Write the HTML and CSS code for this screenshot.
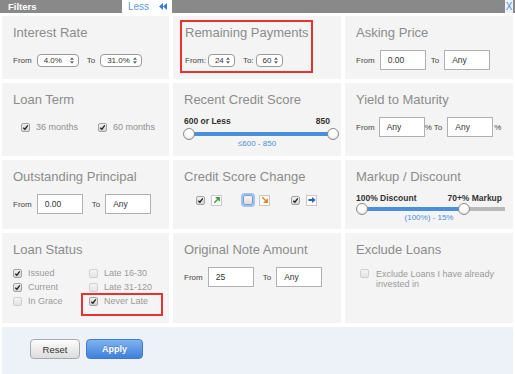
FILE: index.html
```html
<!DOCTYPE html>
<html lang="en">
<head>
  <meta charset="UTF-8">
  <meta name="viewport" content="width=device-width, initial-scale=1.0">
  <title>Filters</title>
  <link rel="stylesheet" href="styles.css">
</head>
<body>
  <div class="topbar">
    <span class="topbar-title">Filters</span>
    <span class="less-tab">Less
      <svg width="8" height="7" viewBox="0 0 8 7"><path d="M0 3.5 L4 0 V7 Z M4 3.5 L8 0 V7 Z" fill="#3a7bd5"/></svg>
    </span>
    <span class="close">X</span>
  </div>

  <div class="filter-grid">
    <!-- Row 1 -->
    <div class="filter-box">
      <h2>Interest Rate</h2>
      <div class="row">
        <span class="lbl">From</span>
        <span class="select w42">4.0% <svg class="updown" viewBox="0 0 5 8"><path d="M2.5 0 L5 3 H0 Z M2.5 8 L5 5 H0 Z" fill="#666"/></svg></span>
        <span class="lbl">To</span>
        <span class="select w42">31.0% <svg class="updown" viewBox="0 0 5 8"><path d="M2.5 0 L5 3 H0 Z M2.5 8 L5 5 H0 Z" fill="#666"/></svg></span>
      </div>
    </div>

    <div class="filter-box">
      <div class="marked-box">
        <h2>Remaining Payments</h2>
        <div class="row">
          <span class="lbl tight">From:</span>
          <span class="select w27">24 <svg class="updown" viewBox="0 0 5 8"><path d="M2.5 0 L5 3 H0 Z M2.5 8 L5 5 H0 Z" fill="#666"/></svg></span>
          <span class="lbl tight">To:</span>
          <span class="select w27">60 <svg class="updown" viewBox="0 0 5 8"><path d="M2.5 0 L5 3 H0 Z M2.5 8 L5 5 H0 Z" fill="#666"/></svg></span>
        </div>
      </div>
    </div>

    <div class="filter-box">
      <h2>Asking Price</h2>
      <div class="row">
        <span class="lbl">From</span>
        <input class="field" type="text" value="0.00">
        <span class="lbl">To</span>
        <input class="field" type="text" value="Any">
      </div>
    </div>

    <!-- Row 2 -->
    <div class="filter-box">
      <h2>Loan Term</h2>
      <div class="row term-row">
        <label class="check"><span class="cb"><svg viewBox="0 0 8 8"><path d="M1.5 4.2 L3.3 6 L6.6 1.6" stroke="#222" stroke-width="1.5" fill="none"/></svg></span>36 months</label>
        <label class="check"><span class="cb"><svg viewBox="0 0 8 8"><path d="M1.5 4.2 L3.3 6 L6.6 1.6" stroke="#222" stroke-width="1.5" fill="none"/></svg></span>60 months</label>
      </div>
    </div>

    <div class="filter-box">
      <h2>Recent Credit Score</h2>
      <div class="slider-labels"><b>600 or Less</b><b>850</b></div>
      <div class="slider credit">
        <div class="track"><div class="fill" style="width: 100%"></div></div>
        <span class="knob" style="left: 2px"></span>
        <span class="knob" style="left: 146px"></span>
      </div>
      <div class="slider-value">&le;600 - 850</div>
    </div>

    <div class="filter-box yield-box">
      <h2>Yield to Maturity</h2>
      <div class="row">
        <span class="lbl">From</span>
        <input class="field" type="text" value="Any">
        <span class="lbl pct">% To</span>
        <input class="field" type="text" value="Any">
        <span class="pct-end">%</span>
      </div>
    </div>

    <!-- Row 3 -->
    <div class="filter-box">
      <h2>Outstanding Principal</h2>
      <div class="row">
        <span class="lbl">From</span>
        <input class="field" type="text" value="0.00">
        <span class="lbl wide">To</span>
        <input class="field" type="text" value="Any">
      </div>
    </div>

    <div class="filter-box">
      <h2>Credit Score Change</h2>
      <div class="row trend-row">
        <span class="trend-group">
          <span class="cb"><svg viewBox="0 0 8 8"><path d="M1.5 4.2 L3.3 6 L6.6 1.6" stroke="#222" stroke-width="1.5" fill="none"/></svg></span>
          <span class="trend"><svg viewBox="0 0 9 9"><path d="M1.5 7.5 L7 2 M3 2 H7 V6" stroke="#3d9b3d" stroke-width="1.6" fill="none"/></svg></span>
        </span>
        <span class="trend-group">
          <span class="cb focus"></span>
          <span class="trend"><svg viewBox="0 0 9 9"><path d="M1.5 1.5 L7 7 M7 3 V7 H3" stroke="#f07a1e" stroke-width="1.6" fill="none"/></svg></span>
        </span>
        <span class="trend-group">
          <span class="cb"><svg viewBox="0 0 8 8"><path d="M1.5 4.2 L3.3 6 L6.6 1.6" stroke="#222" stroke-width="1.5" fill="none"/></svg></span>
          <span class="trend"><svg viewBox="0 0 9 9"><path d="M0.5 3.4 H4.6 V1 L8.6 4.5 L4.6 8 V5.6 H0.5 Z" fill="#2b5fc4"/></svg></span>
        </span>
      </div>
    </div>

    <div class="filter-box">
      <h2>Markup / Discount</h2>
      <div class="slider-labels"><b>100% Discount</b><b>70+% Markup</b></div>
      <div class="slider markup">
        <div class="track"><div class="fill" style="width: 71.6%"></div></div>
        <span class="knob" style="left: 5px"></span>
        <span class="knob" style="left: 107px"></span>
      </div>
      <div class="slider-value">(100%) - 15%</div>
    </div>

    <!-- Row 4 -->
    <div class="filter-box">
      <h2>Loan Status</h2>
      <div class="status-list">
        <label class="check"><span class="cb"><svg viewBox="0 0 8 8"><path d="M1.5 4.2 L3.3 6 L6.6 1.6" stroke="#222" stroke-width="1.5" fill="none"/></svg></span>Issued</label>
        <label class="check"><span class="cb off"></span>Late 16-30</label>
        <label class="check"><span class="cb"><svg viewBox="0 0 8 8"><path d="M1.5 4.2 L3.3 6 L6.6 1.6" stroke="#222" stroke-width="1.5" fill="none"/></svg></span>Current</label>
        <label class="check"><span class="cb off"></span>Late 31-120</label>
        <label class="check"><span class="cb off"></span>In Grace</label>
        <label class="check marked"><span class="cb"><svg viewBox="0 0 8 8"><path d="M1.5 4.2 L3.3 6 L6.6 1.6" stroke="#222" stroke-width="1.5" fill="none"/></svg></span>Never Late</label>
      </div>
    </div>

    <div class="filter-box">
      <h2>Original Note Amount</h2>
      <div class="row">
        <span class="lbl">From</span>
        <input class="field" type="text" value="25">
        <span class="lbl wide">To</span>
        <input class="field" type="text" value="Any">
      </div>
    </div>

    <div class="filter-box">
      <h2>Exclude Loans</h2>
      <label class="exclude"><span class="cb off"></span><span>Exclude Loans I have already invested in</span></label>
    </div>
  </div>

  <div class="footer">
    <button class="btn btn-reset">Reset</button>
    <button class="btn btn-apply">Apply</button>
  </div>
</body>
</html>
```

FILE: styles.css
```css
* {
  box-sizing: border-box;
}

body {
  margin: 0;
  font-family: "Liberation Sans", Arial, sans-serif;
  color: #333;
  background: #fff;
}

/* top bar */
.topbar {
  display: flex;
  align-items: center;
  height: 13px;
  background: #898989;
}

.topbar-title {
  width: 114px;
  margin-left: 8px;
  color: #fff;
  font-size: 9.5px;
  font-weight: bold;
}

.less-tab {
  display: flex;
  align-items: center;
  gap: 10px;
  width: 50px;
  height: 13px;
  padding-left: 6px;
  background: #fff;
  color: #5b9be0;
  font-size: 10px;
}

.close {
  margin-left: auto;
  margin-right: 2px;
  width: 8px;
  height: 13px;
  background: #eef1f5;
  color: #4a8fd8;
  font-size: 10px;
  line-height: 13px;
  text-align: center;
}

/* grid of filters */
.filter-grid {
  display: grid;
  grid-template-columns: 167px 168px 168px;
  grid-template-rows: 63px 73px 69px 90px;
  gap: 4px;
  padding: 3px 2px 0;
}

.filter-box {
  background: #f4f4f4;
  padding: 9px 11px;
}

.filter-box h2 {
  margin: 0;
  font-size: 13px;
  line-height: 15px;
  font-weight: normal;
  color: #8c8c8c;
}

.marked-box {
  width: 133px;
  margin: -5px 0 0 -4px;
  padding: 3px 0 1px 3px;
  border: 2px solid #e8322e;
}

.row {
  display: flex;
  align-items: center;
  height: 20px;
  margin-top: 10px;
  font-size: 8px;
  white-space: nowrap;
}

.lbl {
  flex: none;
  margin-right: 5px;
  color: #444;
}

.lbl.tight {
  margin-right: 2px;
}

.select + .lbl {
  margin-left: 8px;
}

.field + .lbl {
  margin-left: 5px;
}

.field + .lbl.wide {
  margin-left: 9px;
}

.yield-box {
  padding-right: 4px;
}

.yield-box .lbl {
  margin-right: 4px;
}

.field + .lbl.pct {
  margin-left: 0;
  margin-right: 5px;
}

.pct-end {
  display: block;
  flex: none;
  width: 8px;
  margin-left: 1px;
  color: #444;
  font-size: 8px;
}

.select {
  display: inline-flex;
  flex: none;
  align-items: center;
  justify-content: space-between;
  height: 13px;
  padding: 0 4px 0 6px;
  border: 1px solid #9a9a9a;
  border-radius: 4px;
  background: #fff;
  color: #333;
  font-size: 8px;
}

.w42 {
  width: 42px;
}

.w27 {
  width: 27px;
}

.updown {
  width: 4px;
  height: 7px;
}

.field {
  flex: none;
  width: 46px;
  height: 20px;
  padding: 0 0 0 7px;
  border: 1px solid #b0b0b0;
  background: #fff;
  font-family: inherit;
  font-size: 8.5px;
  color: #333;
}

/* checkboxes */
.check {
  display: flex;
  align-items: center;
  gap: 6px;
}

.cb {
  display: inline-flex;
  align-items: center;
  justify-content: center;
  flex: none;
  width: 9px;
  height: 9px;
  border: 1px solid #a3a3a3;
  border-radius: 2px;
  background: linear-gradient(#f0f0f0, #d4d4d4);
}

.cb svg {
  width: 7px;
  height: 7px;
}

.cb.off {
  border-color: #cfcfcf;
  background: linear-gradient(#f4f4f4, #e4e4e4);
}

.cb.focus {
  width: 10px;
  height: 10px;
  border-color: #7d9ac4;
  background: linear-gradient(#f4f4f4, #dedede);
  box-shadow: 0 0 0 2px #9cc3f3;
}

.term-row {
  padding-left: 8px;
  gap: 20px;
  font-size: 9px;
  color: #8f8f8f;
}

.trend-row {
  margin-top: 6px;
  padding-left: 12px;
  gap: 21px;
}

.trend-group {
  display: flex;
  align-items: center;
  gap: 6px;
}

.trend {
  display: inline-flex;
  align-items: center;
  justify-content: center;
  width: 11px;
  height: 11px;
  border: 1px solid #c9c9c9;
  background: #fff;
}

.trend svg {
  width: 8px;
  height: 8px;
}

/* sliders */
.slider-labels {
  display: flex;
  justify-content: space-between;
  margin-top: 9px;
  font-size: 8.5px;
  line-height: 10px;
  color: #333;
}

.slider {
  position: relative;
  height: 12px;
  margin-top: 2px;
}

.slider.credit {
  margin-left: 3px;
  margin-right: -3px;
}

.slider.markup {
  margin: 0 -3px 0 1px;
}

.track {
  position: absolute;
  left: 0;
  right: 0;
  top: 4px;
  height: 4px;
  background: #b9b9b9;
}

.fill {
  height: 4px;
  background: #4a8fdb;
}

.knob {
  position: absolute;
  top: 0;
  width: 12px;
  height: 12px;
  margin-left: -6px;
  border: 1px solid #8a8a8a;
  border-radius: 50%;
  background: radial-gradient(circle at 50% 35%, #fff 40%, #d9d9d9);
}

.slider-value {
  margin-top: -1px;
  font-size: 8px;
  line-height: 10px;
  color: #4a8fd8;
  text-align: center;
}

.markup + .slider-value {
  margin-top: -2px;
}

/* loan status */
.status-list {
  display: grid;
  grid-template-columns: 76px auto;
  grid-auto-rows: 14px;
  margin-top: 9px;
  font-size: 9px;
  color: #9a9a9a;
}

.marked {
  position: relative;
}

.marked::after {
  content: "";
  position: absolute;
  left: -8px;
  top: -1px;
  width: 78px;
  height: 19px;
  border: 2px solid #e8322e;
}

.exclude {
  display: flex;
  align-items: flex-start;
  gap: 7px;
  margin-top: 12px;
  padding-left: 4px;
  font-size: 9px;
  line-height: 10px;
  color: #9a9a9a;
}

/* footer */
.footer {
  display: flex;
  align-items: flex-start;
  gap: 6px;
  height: 47px;
  margin: 4px 2px 0;
  padding: 12px 0 0 28px;
  background: #edf1f8;
}

.btn {
  height: 20px;
  border-radius: 4px;
  font-family: inherit;
  cursor: pointer;
}

.btn-reset {
  width: 50px;
  border: 1px solid #a9a9a9;
  background: linear-gradient(#fdfdfd, #dcdcdc);
  color: #333;
  font-size: 9.5px;
}

.btn-apply {
  width: 57px;
  border: 1px solid #3f7bcc;
  background: linear-gradient(#80b3f1, #3f80da);
  color: #fff;
  font-size: 9px;
  font-weight: bold;
  text-shadow: 0 -1px 0 rgba(0, 0, 0, 0.2);
}
```
